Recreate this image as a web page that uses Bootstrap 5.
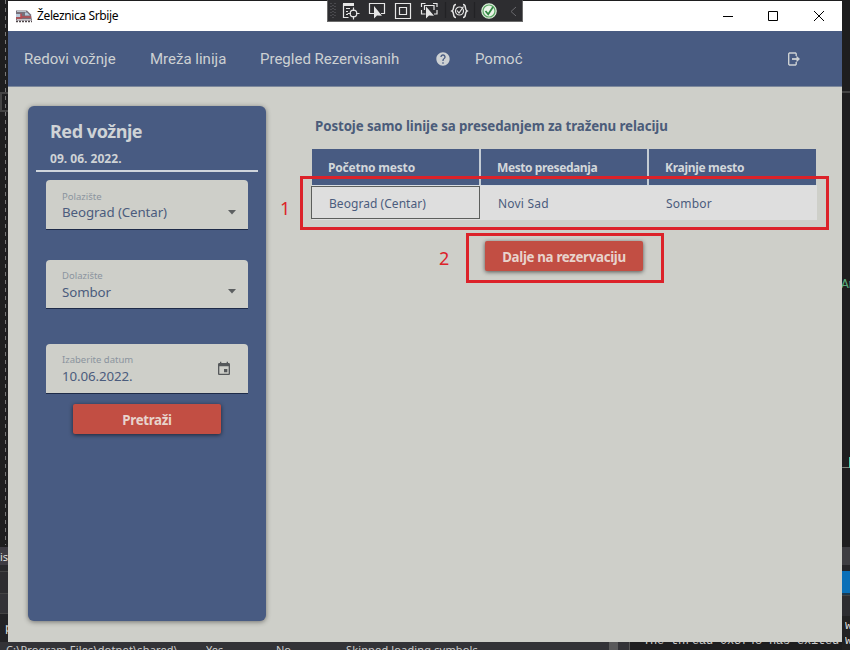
<!DOCTYPE html>
<html lang="sr-Latn">
<head>
<meta charset="utf-8">
<meta name="viewport" content="width=device-width, initial-scale=1">
<title>Železnica Srbije</title>
<link href="https://cdn.jsdelivr.net/npm/bootstrap@5.3.0/dist/css/bootstrap.min.css" rel="stylesheet">
<style>
body{width:850px;height:650px;background:#1e1e1f;font-family:"Noto Sans","Open Sans",sans-serif;line-height:1;color:#485b82}
.t{white-space:nowrap;display:block}
.desk{position:absolute;white-space:nowrap;overflow:hidden}
.guide{left:5px;top:0;width:1px;height:545px;background:repeating-linear-gradient(#777 0 4px,transparent 4px 8px)}
.app-window{position:absolute;left:8px;top:1px;width:834px;height:641px;background:#cecfc9}
.titlebar{height:30px;background:#fff;color:#000;padding-left:8px}
.titlebar .t{font-size:12px;letter-spacing:-.37px;margin-left:5px}
.debugbar{position:absolute;left:327px;top:0;width:196px;height:22px;background:#2d2d30;border:1px solid #6b6b6b;border-top-color:#2d2d30}
.topnav{height:56px;background:#485b82;border-bottom:1px solid #7d899c;font-family:Roboto,sans-serif;font-size:15px;color:#cdd1d3;padding-left:16px}
.topnav .t{padding-top:2px}
.panel{width:238px;height:515px;background:#485b82;border-radius:6px;margin:19px 0 0 20px;box-shadow:0 1px 5px rgba(0,0,0,.45);color:#cfd3d6}
.panel-head{height:66px;margin:0 8px;padding:16px 0 0 14px;border-bottom:2px solid #cfd5dc}
.panel-head .big{font-size:18px;font-weight:700;letter-spacing:-.45px}
.panel-head .date{font-size:12px;font-weight:700;letter-spacing:.02px;margin-top:13px}
.field{width:202px;height:50px;margin-left:18px;background:#cecfc9;border-radius:4px 4px 0 0;border-bottom:1px solid #1e2b48;padding:0 11px 0 16px;color:#4b5c7d}
.field .cap{font-size:9.5px;color:#8b949e;padding-top:12px}
.field .val{font-size:13.3px;letter-spacing:-.1px;margin-top:4px}
.btn.go{background:#c24e43;color:#e8d3cc;border:0;border-radius:2px;height:30px;padding:2px 0 0;font-size:13.3px;font-weight:700;line-height:28px;letter-spacing:-.32px;box-shadow:0 1px 4px rgba(0,0,0,.6)}
.results{margin:0 0 0 45px;width:506px}
.results .msg{font-size:13.3px;font-weight:700;letter-spacing:-.09px;margin:33px 0 0 4px;color:#4b5c7a}
.headrow{width:504px;height:36px;margin:16px 0 0 1px;background:#485b82;color:#d3d7da;font-size:12px;font-weight:700}
.headrow>div{width:169px;padding:13px 0 0 16px;border-right:2px solid #c4ccd4}
.headrow>div:nth-child(2){width:168px}
.headrow>div:last-child{width:167px;border:0}
.headrow .t{letter-spacing:-.41px}
.datarow{height:35px;margin-left:1px;background:#dedede;border-top:1px solid #d8dce0;font-size:12px;color:#4b5c7d}
.datarow>div{width:168px;height:33px;line-height:35px;padding-left:18px}
.datarow>div:first-child{width:169px;border:1px solid #5c5e5c;margin-left:-1px;padding-left:17px;line-height:33px;letter-spacing:.05px}
.mark-box{position:absolute;border:3px solid #dc2229}
.mark-num{position:absolute;color:#dc2229;font-size:18px}
</style>
<script src="https://cdn.jsdelivr.net/npm/bootstrap@5.3.0/dist/js/bootstrap.bundle.min.js"></script>
</head>
<body class="position-relative overflow-hidden m-0">
<!-- editor behind the window -->
<div class="desk guide"></div>
<div class="desk" style="left:0;top:92px;width:8px;height:20px;border:2px solid #444;border-right:0"></div>
<div class="desk" style="left:842px;top:91px;width:8px;height:2px;background:#444"></div>
<div class="desk" style="left:0;top:547px;width:8px;height:103px;background:linear-gradient(#3e3c43 0 18px,#29292c 18px 24px,#444 24px 25px,#2d2d30 25px 46px,#444 46px 47px,#333337 47px 66px,#444 66px 67px,#222225 67px)"></div>
<div class="desk" style="left:0;top:551px;width:8px;font-size:11px;color:#ddd">is:</div>
<div class="desk" style="left:5px;top:622px;width:3px;font-size:12px;color:#ddd">p</div>
<div class="desk" style="left:841px;top:277px;width:9px;font:13px 'Liberation Mono',monospace;letter-spacing:-1px;color:#58a878">Ar</div>
<div class="desk" style="left:842px;top:455px;width:8px;height:16px;font:13px 'Liberation Mono',monospace;color:#c8c8b8">_</div>
<div class="desk" style="left:849px;top:457px;width:1px;height:11px;background:#4ec9b0"></div>
<div class="desk" style="left:842px;top:547px;width:8px;height:103px;background:linear-gradient(#3e3e42 0 18px,#252528 18px 24px,#0b70b8 24px 46px,#1c3a50 46px 48px,#444 48px 49px,#2d2d30 49px 69px,#222 69px)"></div>
<div class="desk" style="left:845px;top:619px;width:5px;font:12px 'Liberation Mono',monospace;color:#ddd">w</div>
<div class="desk" style="left:845px;top:634px;width:5px;font:12px 'Liberation Mono',monospace;color:#ddd">w</div>
<div class="desk" style="left:0;top:642px;width:609px;height:8px;background:#333337"></div>
<div class="desk" style="left:609px;top:642px;width:9px;height:8px;background:#59595a"></div>
<div class="desk" style="left:618px;top:642px;width:12px;height:8px;background:#333337;border-right:1px solid #555"></div>
<div class="desk" style="left:6px;top:644px;font-size:11px;color:#ccc;letter-spacing:.16px">C:\Program Files\dotnet\shared\</div>
<div class="desk" style="left:206px;top:644px;font-size:11px;color:#ccc">Yes</div>
<div class="desk" style="left:276px;top:644px;font-size:11px;color:#ccc">No</div>
<div class="desk" style="left:346px;top:644px;font-size:11px;color:#ccc;letter-spacing:.15px">Skipped loading symbols.</div>
<div class="desk" style="left:643px;top:634px;font:12px 'Liberation Mono',monospace;color:#ccc;letter-spacing:-.2px">The thread 0x3f48 has exited</div>

<div class="app-window">
  <header class="titlebar d-flex align-items-center">
    <svg width="16" height="13" viewBox="0 0 16 13"><path d="M0 .5h11l4 4 1 6H0z" fill="#77707a"/><path d="M1 1.500h9" stroke="#b9c3cc"/><path d="M0 4h5v3H0zM9 2.500h2l3 3H9z" fill="#b8cbdc"/><path d="M5 3.500v3.500h10M0 8h6" fill="none" stroke="#b84a4f" stroke-width="1.500"/><path d="M1 9.500h14" stroke="#c8c0c4"/><path d="M0 11.500h16" stroke="#51484b" stroke-width="1.600" stroke-dasharray="2 1"/></svg>
    <span class="t">Železnica Srbije</span>
    <svg class="ms-auto" style="margin-right:16px" width="104" height="14" viewBox="0 0 104 14" fill="none" stroke="#000" stroke-width="1"><path d="M1 7.500h10M46.500 2.500h9v9h-9zM92 2l10 10M102 2L92 12"/></svg>
  </header>
  <nav class="topnav d-flex align-items-center">
    <span class="t" style="width:126px">Redovi vožnje</span>
    <span class="t" style="width:110px">Mreža linija</span>
    <span class="t" style="width:175px">Pregled Rezervisanih</span>
    <svg width="16" height="16" viewBox="0 0 24 24" fill="#cdd1d3"><path d="M12 2C6.480 2 2 6.480 2 12s4.480 10 10 10 10-4.480 10-10S17.520 2 12 2zm1 17h-2v-2h2v2zm2.070-7.750-.9.920C13.450 12.900 13 13.500 13 15h-2v-.5c0-1.100.450-2.100 1.170-2.830l1.240-1.260c.370-.360.590-.860.590-1.410 0-1.100-.9-2-2-2s-2 .9-2 2H8c0-2.210 1.790-4 4-4s4 1.790 4 4c0 .880-.360 1.680-.930 2.250z"/></svg>
    <span class="t" style="margin-left:24px">Pomoć</span>
    <svg class="ms-auto" style="margin-right:40px" width="16" height="16" viewBox="0 0 16 16" fill="none" stroke="#cdd1d3"><path d="M10.200 5V2.800L9.500 2H3.500l-.8.800v10.400l.8.800h6l.7-.8V11" stroke-width="1.400"/><path d="M6 8h5" stroke-width="1.800"/><path d="M10.500 4.800L14 8l-3.500 3.200z" fill="#cdd1d3" stroke="none"/></svg>
  </nav>
  <main class="d-flex align-items-start">
    <aside class="panel flex-shrink-0">
      <div class="panel-head">
        <span class="t big">Red vožnje</span>
        <span class="t date">09. 06. 2022.</span>
      </div>
      <div class="field d-flex justify-content-between" style="margin-top:8px">
        <div><span class="t cap">Polazište</span><span class="t val">Beograd (Centar)</span></div>
        <svg class="align-self-center" style="margin-top:15px" width="10" height="5"><path d="M1 0h8L5 4.500z" fill="#5c5f60"/></svg>
      </div>
      <div class="field d-flex justify-content-between" style="margin-top:30px;height:49px">
        <div><span class="t cap" style="padding-top:11px">Dolazište</span><span class="t val" style="margin-top:5px">Sombor</span></div>
        <svg class="align-self-center" style="margin-top:15px" width="10" height="5"><path d="M1 0h8L5 4.500z" fill="#5c5f60"/></svg>
      </div>
      <div class="field d-flex justify-content-between" style="margin-top:35px">
        <div><span class="t cap" style="padding-top:11px">Izaberite datum</span><span class="t val" style="margin-top:5px">10.06.2022.</span></div>
        <svg class="align-self-center" style="margin-right:5px" width="16" height="16" viewBox="0 0 24 24" fill="#55585a"><path d="M17 12h-5v5h5v-5zM16 1v2H8V1H6v2H5c-1.110 0-1.990.9-1.990 2L3 19c0 1.100.890 2 2 2h14c1.100 0 2-.9 2-2V5c0-1.100-.9-2-2-2h-1V1h-2zm3 18H5V8h14v11z"/></svg>
      </div>
      <button class="btn go d-block" style="width:148px;margin:10px 0 0 45px">Pretraži</button>
    </aside>
    <section class="results">
      <span class="t msg">Postoje samo linije sa presedanjem za traženu relaciju</span>
      <div class="headrow d-flex">
        <div><span class="t" style="letter-spacing:-.2px">Početno mesto</span></div>
        <div><span class="t">Mesto presedanja</span></div>
        <div><span class="t" style="letter-spacing:-.3px">Krajnje mesto</span></div>
      </div>
      <div class="datarow d-flex">
        <div>Beograd (Centar)</div><div style="letter-spacing:.2px">Novi Sad</div><div style="letter-spacing:.2px">Sombor</div>
      </div>
      <button class="btn go d-block" style="width:158px;margin:21px 0 0 174px">Dalje na rezervaciju</button>
    </section>
  </main>
</div>

<!-- debugging toolbar -->
<div class="debugbar"><svg class="d-block" width="194" height="20" viewBox="328 1 194 20" fill="none" stroke="#e6e6e6" stroke-width="1.200">
<path d="M331 3v15M335 3v15M333 5v14" stroke="#66666a" stroke-width="1" stroke-dasharray="1 2"/>
<path d="M343 3h11v3h-11z" fill="#e6e6e6" stroke="none"/><path d="M343.500 4v13.500h5M346 8.500h4M346 11.500h2M346 14.500h2M353.500 7.500v3.500M353.500 16v3.500M347.500 13.500h3.500M356 13.500h3.500"/><circle cx="353.500" cy="13.500" r="3.300"/>
<path d="M374 13.500h-4.500v-10h15v10H381"/><path d="M374 6v12.500l3-3 5 .3z" fill="#e6e6e6" stroke="none"/>
<path d="M395.500 3.500h15v15h-15zM399.500 7.500h7v7h-7z"/>
<path d="M421.500 7V3.500h4M433 3.500h4V7M437 10v4h-3M421.500 10v4h4M424.500 10V5.500h9.500V10"/><path d="M426 6.500v12l3-3 5 .3z" fill="#e6e6e6" stroke="none"/>
<path d="M445.500 2v16M474.500 2v16" stroke="#222225"/>
<path d="M456 4.500c-4 0-1 5-4 6.500 3 1.500 0 6.500 4 6.500M463 4.500c4 0 1 5 4 6.500-3 1.500 0 6.500-4 6.500" stroke-width="1.500"/><circle cx="459.500" cy="11" r="4"/><path d="M457 10.500l2 2.500 4.500-6.500"/>
<circle cx="489" cy="11" r="7.200" fill="#e9f3e7" stroke="#d7ecd5"/><circle cx="489" cy="11" r="6" stroke="#5aa764"/><path d="M485.500 11l2.700 3.300L493 7" stroke="#2f8540" stroke-width="1.700"/>
<path d="M516 7l-5 4.500 5 4.500" stroke="#69696d" stroke-width="1"/>
</svg></div>

<!-- numbered step highlights -->
<div class="mark-box" style="left:300px;top:176px;width:529px;height:54px"></div>
<div class="mark-box" style="left:466px;top:233px;width:198px;height:50px"></div>
<div class="mark-num" style="left:280px;top:199px">1</div>
<div class="mark-num" style="left:439px;top:249px">2</div>
</body>
</html>
